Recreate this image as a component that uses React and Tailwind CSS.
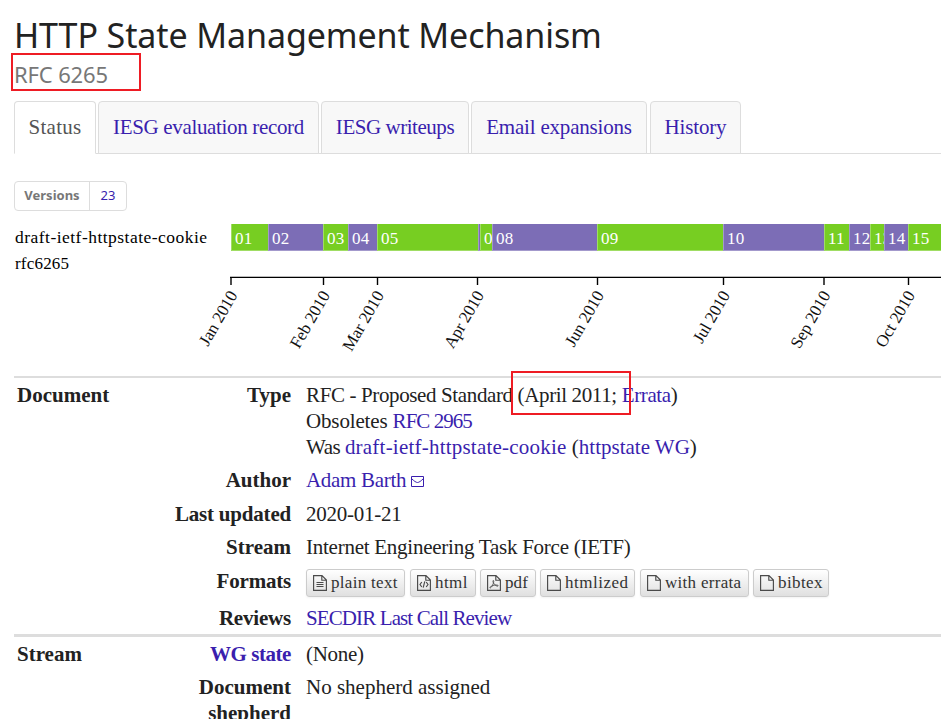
const segs = [
  [231, 37, "01"], [268, 55, "02"], [323, 25, "03"], [348, 29, "04"], [377, 101, "05"],
  [478, 2, ""], [480, 12, "0"], [492, 105, "08"], [597, 126, "09"], [723, 101, "10"],
  [824, 25, "11"], [849, 21, "12"], [870, 14, "13"], [884, 24, "14"], [908, 33, "15"],
];

const ticks = [
  [231, "Jan 2010", 60], [323.5, "Feb 2010", 63], [377.5, "Mar 2010", 66], [477.5, "Apr 2010", 63],
  [597.5, "Jun 2010", 61], [723.5, "Jul 2010", 57], [824, "Sep 2010", 63], [908.5, "Oct 2010", 62],
];

function Timeline() {
  return (
    <svg className="block font-['Liberation_Serif',serif]" width="941" height="144" viewBox="0 221 941 144">
      <text x="15" y="243" fontSize="17.5" textLength="192">draft-ietf-httpstate-cookie</text>
      <text x="15" y="269" fontSize="17" textLength="54">rfc6265</text>
      {segs.map(([x, w, label], i) => (
        <svg key={x} x={x} y="224" width={w} height="27" overflow="hidden">
          <rect width={w} height="27" fill={i % 2 ? "#7c6db6" : "#77ce22"} />
          <path d={`M.5 0V26.5H${w}`} fill="none" stroke="#fff" strokeOpacity=".3" />
          {label && <text x="4" y="20" fontSize="17" fill="#fff" letterSpacing=".2">{label}</text>}
        </svg>
      ))}
      <path d="M230 276.5H941" stroke="#bbb" />
      <path d="M230 277.5H941" stroke="#000" />
      {ticks.map(([x, label, len]) => (
        <g key={label}>
          <path d={`M${x} 277V285`} stroke="#000" strokeWidth="1.4" />
          <text transform={`translate(${x + 7} 295) rotate(-60)`} textAnchor="end" fontSize="17" textLength={len} fill="#111">{label}</text>
        </g>
      ))}
    </svg>
  );
}

function FileIcon({ kind }) {
  return (
    <svg className="mr-[4px] shrink-0" width="14" height="16" viewBox="0 0 14 16" fill="none" stroke="#4a4a4a" strokeWidth="1.15">
      <path d="M.6 .6H9L13.4 5V15.4H.6ZM8.8 .6V5.2H13.4" />
      {kind === "text" && <path d="M3.5 7.5H10.5M3.5 9.5H10.5M3.5 11.5H10.5" />}
      {kind === "code" && <path d="M4.8 7L3 9.5L4.8 12M9.2 7L11 9.5L9.2 12M7.8 6.3L6.2 12.7" />}
      {kind === "pdf" && <path strokeWidth=".9" d="M6.3 5.5C7.3 5.5 6.5 8.5 5.6 10.2C4.6 12 3.4 13.4 2.9 12.7C2.5 12 5.2 10.4 8.4 10.1C10.6 9.9 11.5 10.4 11.1 11C10.4 11.8 7.8 10.1 6.6 8.2C5.8 6.8 5.8 5.5 6.3 5.5Z" />}
    </svg>
  );
}

const tabs = [
  ["Status", "w-[82px]", "tracking-[0.25px]"],
  ["IESG evaluation record", "w-[221px]", "tracking-[-0.34px]"],
  ["IESG writeups", "w-[148px]", "tracking-[-0.46px]"],
  ["Email expansions", "w-[176px]", "tracking-[-0.2px]"],
  ["History", "w-[91px] ml-px", "tracking-[-0.15px]"],
];

const formats = [
  ["plain text", "text", "w-[99px] mr-[5px] tracking-[0.3px]"],
  ["html", "code", "w-[66px] mr-1 tracking-[0.45px]"],
  ["pdf", "pdf", "w-[56px] mr-1 tracking-[0.1px]"],
  ["htmlized", "", "w-[95px] mr-[5px] tracking-[0.5px]"],
  ["with errata", "", "w-[109px] mr-1 tracking-[0.3px]"],
  ["bibtex", "", "w-[76px] tracking-[0.4px]"],
];

function A({ children, className = "" }) {
  return <a className={`text-[#3a1fae] ${className}`}>{children}</a>;
}

function Row({ section = "", label, height, labelClass = "", children }) {
  return (
    <div className={`flex ${height}`}>
      <div className="w-[140px] shrink-0 pl-[3px] font-bold">{section}</div>
      <div className={`w-[137px] shrink-0 text-right font-bold ${labelClass}`}>{label}</div>
      <div className="pl-[15px] whitespace-nowrap">{children}</div>
    </div>
  );
}

export default function App() {
  return (
    <div className="relative h-[719px] w-[941px] overflow-hidden bg-white font-['Liberation_Serif',serif] text-[21px] leading-[26px] text-[#222]">
      <header className="h-[101px] pl-[14px] pt-[14px] font-['Noto_Sans',sans-serif]">
        <h1 className="text-[34px] leading-[42px] whitespace-nowrap tracking-[-0.1px]">HTTP State Management Mechanism</h1>
        <div className="pt-[4px] text-[22px] leading-[28px] text-[#777] tracking-[-0.15px]">RFC 6265</div>
      </header>

      <nav className="ml-[14px] flex h-[53px] gap-[2px] border-b border-[#ddd]">
        {tabs.map(([name, w, t], i) => (
          <div
            key={name}
            className={`${w} ${t} h-[53px] shrink-0 rounded-t-[4px] border border-[#ddd] pt-[12px] text-center leading-[26px] whitespace-nowrap ${
              i === 0 ? "border-b-white bg-white text-[#555]" : "bg-[#f8f8f8] text-[#3a1fae]"
            }`}
          >
            {name}
          </div>
        ))}
      </nav>

      <div className="h-[67px] pt-[27px] pl-[14px]">
        <div className="flex h-[30px] w-[113px] rounded-[4px] border border-[#ddd] font-['Noto_Sans',sans-serif] text-[13px] leading-[27px]">
          <div className="w-[75px] border-r border-[#ddd] text-center font-bold text-[#777]">Versions</div>
          <div className="flex-1 text-center text-[#3a1fae]">23</div>
        </div>
      </div>

      <Timeline />

      <div className="mt-[11px] ml-[14px] border-t-2 border-[#ddd] pt-1">
        <Row section="Document" label="Type" height="h-[85px]">
          <span className="tracking-[-0.37px]">RFC - Proposed Standard (April 2011; <A>Errata</A>)</span>
          <br />
          <span className="tracking-[-0.15px]">Obsoletes </span>
          <A className="tracking-[-0.95px]">RFC 2965</A>
          <br />
          <span className="tracking-[-0.5px]">Was </span>
          <A className="tracking-[0.22px]">draft-ietf-httpstate-cookie</A> (<A>httpstate WG</A>)
        </Row>
        <Row label="Author" height="h-[34px]">
          <div className="flex items-center">
            <A className="tracking-[-0.3px]">Adam Barth</A>
            <svg className="ml-[5px] mt-[3px]" width="13" height="11" viewBox="0 0 13 11" fill="none" stroke="#3a1fae">
              <path d="M.5 .5H12.5V10.5H.5ZM.5 2.5C3 5 5 6.5 6.5 6.5S10 5 12.5 2.5" />
            </svg>
          </div>
        </Row>
        <Row label="Last updated" labelClass="tracking-[-0.2px]" height="h-[33px]">
          <span className="tracking-[-0.25px]">2020-01-21</span>
        </Row>
        <Row label="Stream" height="h-[34px]">
          <span className="tracking-[-0.25px]">Internet Engineering Task Force (IETF)</span>
        </Row>
        <Row label="Formats" labelClass="tracking-[-0.2px]" height="h-[37px]">
          <div className="mt-[1px] flex">
            {formats.map(([name, kind, w]) => (
              <div
                key={name}
                className={`${w} flex h-[28px] items-center rounded-[3px] border border-[#ccc] bg-gradient-to-b from-white to-[#e0e0e0] pl-[6px] text-[17px] text-[#333] shadow-xs`}
              >
                <FileIcon kind={kind} />
                {name}
              </div>
            ))}
          </div>
        </Row>
        <Row label="Reviews" labelClass="tracking-[-0.2px]" height="h-[29px]">
          <A className="tracking-[-0.89px]">SECDIR Last Call Review</A>
        </Row>
      </div>
      <div className="ml-[14px] border-t-[3px] border-[#ddd] pt-1">
        <Row section="Stream" label={<A className="tracking-[-0.45px]">WG state</A>} height="h-[33px]">
          <span className="tracking-[-0.3px]">(None)</span>
        </Row>
        <Row label={<>Document<br />shepherd</>} height="h-[60px]">No shepherd assigned</Row>
      </div>

      <div className="absolute left-[11px] top-[53px] h-[38px] w-[130px] border-2 border-[#ee1c24]" />
      <div className="absolute left-[511px] top-[371px] h-[44px] w-[120px] border-2 border-[#ee1c24]" />
    </div>
  );
}
